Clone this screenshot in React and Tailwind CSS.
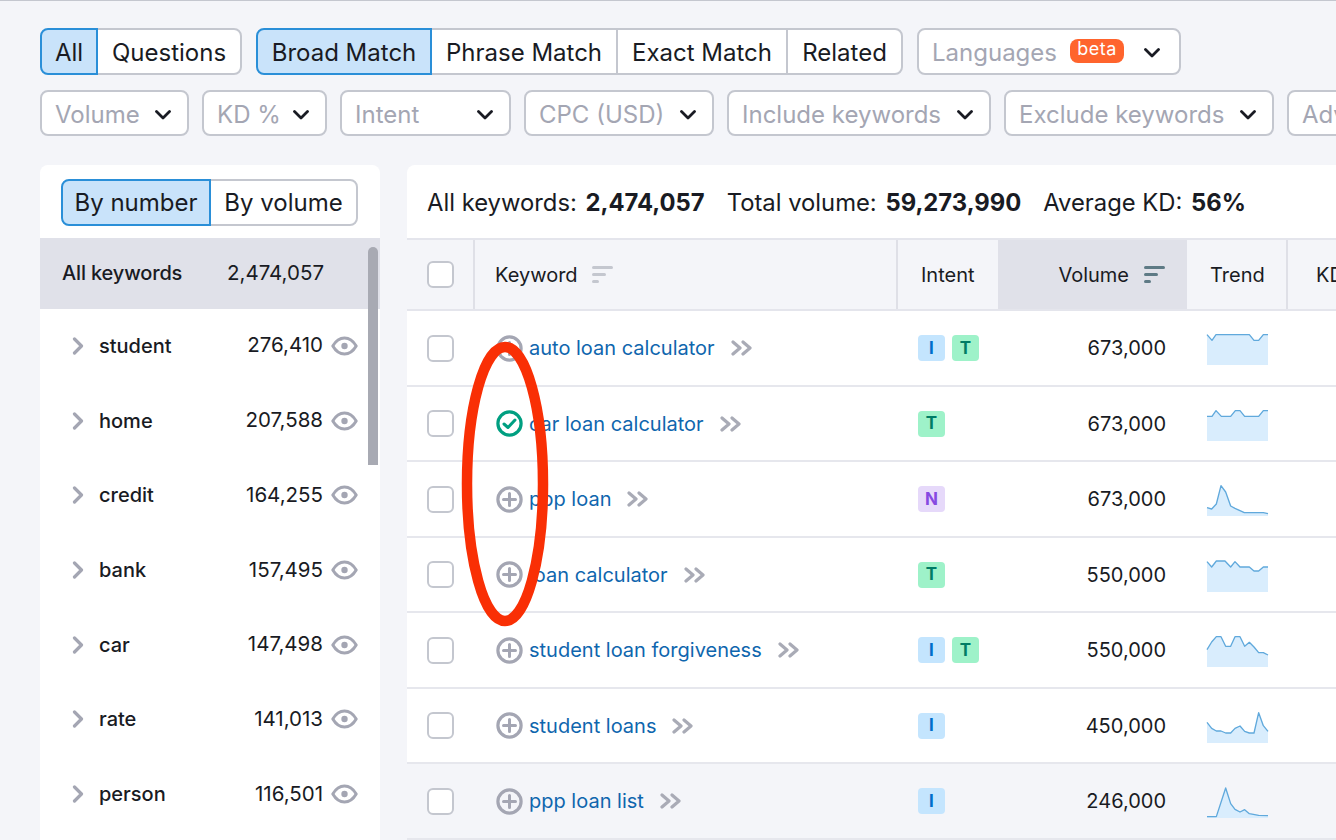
import React from 'react';

const sideRows = [
  { name: 'student', count: '276,410' },
  { name: 'home', count: '207,588' },
  { name: 'credit', count: '164,255' },
  { name: 'bank', count: '157,495' },
  { name: 'car', count: '147,498' },
  { name: 'rate', count: '141,013' },
  { name: 'person', count: '116,501' },
];

const keywordRows = [
  { keyword: 'auto loan calculator', intents: ['I', 'T'], volume: '673,000', trend: '0,11 15,28 27,11 127,11 141,28 155,28 169,11 183,11' },
  { keyword: 'car loan calculator', intents: ['T'], volume: '673,000', added: true, trend: '0,28 15,28 27,11 43,28 71,28 85,11 99,11 113,28 155,28 169,11 183,11' },
  { keyword: 'ppp loan', intents: ['N'], volume: '673,000', trend: '0,77 14,81 28,66 42,11 56,30 71,72 84,79 112,92 169,92 183,95' },
  { keyword: 'loan calculator', intents: ['T'], volume: '550,000', trend: '0,11 14,27 28,9 54,9 71,27 84,11 99,27 127,27 141,39 155,39 169,27 183,27' },
  { keyword: 'student loan forgiveness', intents: ['I', 'T'], volume: '550,000', trend: '0,50 14,27 28,11 42,11 56,40 71,40 84,11 99,11 113,40 127,28 141,42 155,59 169,59 183,66' },
  { keyword: 'student loans', intents: ['I'], volume: '450,000', trend: '0,40 14,58 28,66 42,66 56,72 71,72 84,58 99,51 113,67 127,72 141,72 155,11 169,50 183,67' },
  { keyword: 'ppp loan list', intents: ['I'], volume: '246,000', shaded: true, trend: '0,98 28,98 56,12 71,59 84,76 99,84 113,77 127,89 155,94 183,95' },
];

const badgeStyles = {
  I: 'bg-[#c4e5fe] text-[#006dca]',
  T: 'bg-[#9ef2c9] text-[#007c65]',
  N: 'bg-[#e6d9fa] text-[#8649e1]',
};

const ChevronDown = () => (
  <svg width="16" height="10" viewBox="0 0 16 10" fill="none" className="shrink-0">
    <path d="M1.500 1.500 8 8l6.500-6.500" stroke="#191b23" strokeWidth="2.800" strokeLinecap="round" strokeLinejoin="round" />
  </svg>
);

const ChevronRight = () => (
  <svg width="12" height="18" viewBox="0 0 12 18" fill="none" className="shrink-0">
    <path d="M2.500 2l7 7-7 7" stroke="#a4a6b3" strokeWidth="3.200" strokeLinecap="round" strokeLinejoin="round" />
  </svg>
);

const DoubleChevron = () => (
  <svg width="22" height="16" viewBox="0 0 22 16" fill="none" className="shrink-0">
    <path d="M2 2l7 6-7 6M12 2l7 6-7 6" stroke="#a9abb6" strokeWidth="3.200" strokeLinecap="round" strokeLinejoin="round" />
  </svg>
);

const Eye = () => (
  <svg width="27" height="20" viewBox="0 0 27 20" fill="none" className="shrink-0">
    <path d="M1.800 10C5 4.500 9 2 13.500 2s8.500 2.500 11.700 8c-3.200 5.500-7.200 8-11.700 8s-8.500-2.500-11.700-8Z" stroke="#a4a6b3" strokeWidth="3" strokeLinejoin="round" />
    <circle cx="13.500" cy="10" r="3.200" fill="#a4a6b3" />
  </svg>
);

const PlusCircle = () => (
  <svg width="27" height="27" viewBox="0 0 27 27" fill="none" className="shrink-0">
    <circle cx="13.500" cy="13.500" r="11.600" stroke="#a4a6b3" strokeWidth="3.200" />
    <path d="M13.500 7.500v12M7.500 13.500h12" stroke="#a4a6b3" strokeWidth="3" strokeLinecap="round" />
  </svg>
);

const CheckCircle = () => (
  <svg width="27" height="27" viewBox="0 0 27 27" fill="none" className="shrink-0">
    <circle cx="13.500" cy="13.500" r="11.600" stroke="#009f81" strokeWidth="3.200" />
    <path d="M8 14l4 3.500 7-7.500" stroke="#009f81" strokeWidth="3" strokeLinecap="round" strokeLinejoin="round" />
  </svg>
);

const SortIcon = ({ color }) => (
  <svg width="21" height="17" viewBox="0 0 21 17" className="shrink-0" fill={color}>
    <rect x="0" y="0" width="21" height="3" rx="1.500" />
    <rect x="0" y="7" width="14" height="3" rx="1.500" />
    <rect x="0" y="14" width="7" height="3" rx="1.500" />
  </svg>
);

const Trend = ({ points }) => {
  const first = points.split(' ')[0].split(',')[0];
  const last = points.split(' ').pop().split(',')[0];
  return (
    <svg width="61" height="34" viewBox="0 0 183 102" className="overflow-visible">
      <polygon points={`${first},102 ${points} ${last},102`} fill="#d9edfd" />
      <polyline points={points} fill="none" stroke="#60a9dc" strokeWidth="4" strokeLinejoin="round" />
    </svg>
  );
};

const Checkbox = () => (
  <div className="h-[27px] w-[27px] rounded-[6px] border-2 border-[#c4c7cf] bg-white" />
);

const Segment = ({ label, active, first, last, className = '' }) => (
  <div
    className={`flex h-full items-center justify-center border-2 ${
      active ? 'z-10 border-[#2a8fd8] bg-[#c9e3fa]' : 'border-[#c4c7cf] bg-white'
    } ${first ? 'rounded-l-[8px]' : '-ml-[2px]'} ${last ? 'rounded-r-[8px]' : ''} ${className}`}
  >
    {label}
  </div>
);

const Filter = ({ label, width, right = 'pr-[16px]', children }) => (
  <div className={`flex h-full shrink-0 items-center justify-between rounded-[8px] border-2 border-[#c4c7cf] bg-white pl-[13px] pt-[3px] text-[#a4a6b3] ${right} ${width}`}>
    <span className="whitespace-nowrap">{label}</span>
    {children}
    <ChevronDown />
  </div>
);

export default function App() {
  return (
    <div className="relative h-[840px] w-[1336px] overflow-hidden border-t border-[#c4c7cf] bg-[#f4f5f9] font-['Inter',sans-serif] text-[#191b23]">
      <div className="pl-10 pt-[27px]">
        {/* Tabs */}
        <div className="flex h-[47px] gap-[14px] text-[24px]">
          <div className="flex h-full">
            <Segment label="All" active first className="w-[58px] pt-[3px]" />
            <Segment label="Questions" last className="w-[146px] pt-[3px]" />
          </div>
          <div className="flex h-full">
            <Segment label="Broad Match" active first className="w-[176px] pt-[3px]" />
            <Segment label="Phrase Match" className="w-[188px] pt-[3px]" />
            <Segment label="Exact Match" className="w-[172px] pt-[3px]" />
            <Segment label="Related" last className="w-[117px] pt-[3px]" />
          </div>
          <Filter label="Languages" width="w-[264px]" right="pr-[19px]">
            <span className="mb-[5px] ml-[13px] mr-auto flex h-[24px] w-[54px] items-start justify-center rounded-[8px] bg-[#ff642d] text-[18px] leading-[20px] tracking-[0.5px] text-white">
              beta
            </span>
          </Filter>
        </div>

        {/* Filters */}
        <div className="mt-[15px] flex h-[46px] gap-[13px] text-[24px]">
          <Filter label="Volume" width="w-[149px]" />
          <Filter label="KD %" width="w-[125px]" />
          <Filter label="Intent" width="w-[171px]" />
          <Filter label="CPC (USD)" width="w-[190px]" />
          <Filter label="Include keywords" width="w-[264px]" />
          <Filter label="Exclude keywords" width="w-[270px]" />
          <Filter label="Advanced filters" width="w-[240px]" />
        </div>

        <div className="mt-[29px] flex gap-[27px]">
          {/* Left panel */}
          <div className="relative w-[340px] shrink-0 overflow-hidden rounded-t-[8px] bg-white">
            <div className="flex h-[73px] items-center pl-[21px] pt-[2px]">
              <div className="flex h-[47px] text-[24px]">
                <Segment label="By number" active first className="w-[150px] pt-[1px]" />
                <Segment label="By volume" last className="w-[149px] pt-[1px]" />
              </div>
            </div>
            <div className="flex h-[70.5px] items-center bg-[#e0e1e9] pl-[22px] text-[20px] font-medium">
              <span className="w-[165px] tracking-[-0.15px]">All keywords</span>
              <span className="text-[20.5px] font-normal">2,474,057</span>
            </div>
            {sideRows.map((row) => (
              <div key={row.name} className="flex h-[74.7px] items-center pl-[32px] pr-[22px] text-[20px]">
                <ChevronRight />
                <span className="ml-[15px] flex-1 font-medium">{row.name}</span>
                <span className="mr-[8px] text-[20.5px]">{row.count}</span>
                <Eye />
              </div>
            ))}
            <div className="absolute right-[2px] top-[82px] h-[218px] w-[10px] rounded-t-[5px] bg-[#a8aab3]" />
          </div>

          {/* Keyword table */}
          <div className="min-w-0 flex-1 rounded-tl-[8px] bg-white">
            <div className="flex h-[73px] items-center gap-[22px] pl-[20px] pt-[3px] text-[23.8px]">
              <span>All keywords: <b className="ml-[2px] font-bold">2,474,057</b></span>
              <span>Total volume: <b className="ml-[2px] font-bold">59,273,990</b></span>
              <span>Average KD: <b className="ml-[2px] font-bold">56%</b></span>
            </div>

            <div className="grid h-[73px] grid-cols-[68px_423px_100px_189px_101px_1fr] border-y-2 border-[#e4e5ec] bg-[#f4f5f9] text-[20px]">
              <div className="flex items-center border-r-2 border-[#dfe0e7] pl-[20px]">
                <Checkbox />
              </div>
              <div className="flex items-center gap-[14px] border-r-2 border-[#dfe0e7] pl-[20px]">
                Keyword
                <SortIcon color="#c4c7cf" />
              </div>
              <div className="flex items-center pl-[23px]">Intent</div>
              <div className="flex items-center justify-end gap-[15px] bg-[#e0e1e9] pr-[22px]">
                Volume
                <SortIcon color="#5e7a85" />
              </div>
              <div className="flex items-center border-r-2 border-[#dfe0e7] pl-[23px]">Trend</div>
              <div className="flex items-center whitespace-nowrap pl-[28px]">KD %</div>
            </div>

            {keywordRows.map((row) => (
              <div
                key={row.keyword}
                className={`grid h-[75.5px] grid-cols-[68px_423px_100px_189px_101px_1fr] border-b-2 border-[#e6e7ed] pt-[1px] text-[20px] ${
                  row.shaded ? 'bg-[#f4f5f9]' : 'bg-white'
                }`}
              >
                <div className="flex items-center pl-[20px]">
                  <Checkbox />
                </div>
                <div className="flex items-center pl-[21px]">
                  {row.added ? <CheckCircle /> : <PlusCircle />}
                  <span className="ml-[6px] mr-[16px] text-[#0f66ae]">{row.keyword}</span>
                  <DoubleChevron />
                </div>
                <div className="flex items-center gap-[7px] pl-[20px]">
                  {row.intents.map((intent) => (
                    <span
                      key={intent}
                      className={`flex h-[26px] w-[27px] items-center justify-center rounded-[4px] text-[17px] font-bold ${badgeStyles[intent]}`}
                    >
                      {intent}
                    </span>
                  ))}
                </div>
                <div className="flex items-center justify-end pr-[21px]">{row.volume}</div>
                <div className="flex items-center pl-[20px]">
                  <Trend points={row.trend} />
                </div>
                <div />
              </div>
            ))}
          </div>
        </div>
      </div>

      {/* Red marker drawn over the table */}
      <svg width="96" height="294" viewBox="0 0 96 294" fill="none" className="absolute left-[457px] top-[336px]">
        <ellipse cx="48" cy="147" rx="38" ry="137" stroke="#f92f05" strokeWidth="10.500" />
      </svg>
    </div>
  );
}
